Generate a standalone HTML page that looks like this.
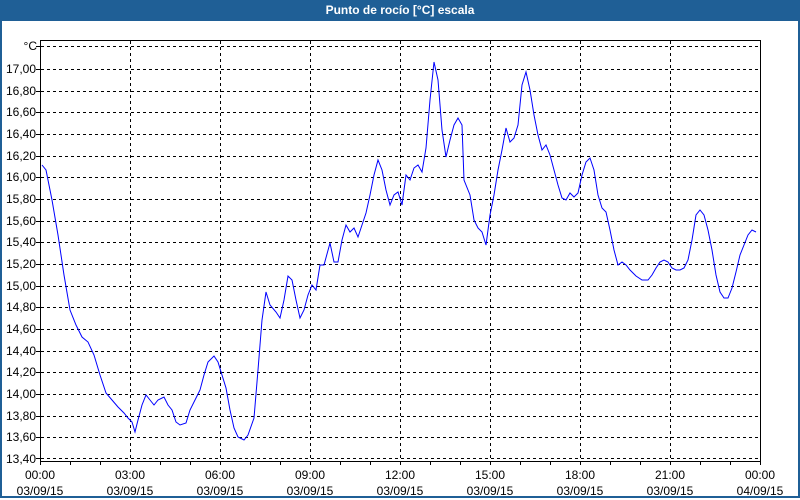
<!DOCTYPE html>
<html><head><meta charset="utf-8"><style>
html,body{margin:0;padding:0;background:#fff;}
body{width:800px;height:500px;overflow:hidden;position:relative;font-family:"Liberation Sans",sans-serif;}
#frame{position:absolute;left:0;top:0;width:796px;height:496px;border:2px solid #1f5f96;border-top:none;}
#title{position:absolute;left:0;top:0;width:800px;height:21px;background:#1f5f96;color:#fff;font-weight:bold;font-size:12px;text-align:center;line-height:21px;}
svg{position:absolute;left:0;top:0;}
text{font-family:"Liberation Sans",sans-serif;font-size:12px;fill:#000;}
</style></head><body>
<div id="frame"></div>
<div id="title">Punto de rocío [°C] escala</div>
<svg width="800" height="500">
<g stroke="#000" stroke-width="1" stroke-dasharray="3,3" shape-rendering="crispEdges">
<line x1="41" y1="46.5" x2="760" y2="46.5"/>
<line x1="41" y1="69.5" x2="760" y2="69.5"/>
<line x1="41" y1="91.5" x2="760" y2="91.5"/>
<line x1="41" y1="112.5" x2="760" y2="112.5"/>
<line x1="41" y1="134.5" x2="760" y2="134.5"/>
<line x1="41" y1="156.5" x2="760" y2="156.5"/>
<line x1="41" y1="177.5" x2="760" y2="177.5"/>
<line x1="41" y1="199.5" x2="760" y2="199.5"/>
<line x1="41" y1="221.5" x2="760" y2="221.5"/>
<line x1="41" y1="242.5" x2="760" y2="242.5"/>
<line x1="41" y1="264.5" x2="760" y2="264.5"/>
<line x1="41" y1="286.5" x2="760" y2="286.5"/>
<line x1="41" y1="307.5" x2="760" y2="307.5"/>
<line x1="41" y1="329.5" x2="760" y2="329.5"/>
<line x1="41" y1="351.5" x2="760" y2="351.5"/>
<line x1="41" y1="372.5" x2="760" y2="372.5"/>
<line x1="41" y1="394.5" x2="760" y2="394.5"/>
<line x1="41" y1="416.5" x2="760" y2="416.5"/>
<line x1="41" y1="437.5" x2="760" y2="437.5"/>
<line x1="41" y1="458.5" x2="760" y2="458.5"/>
<line x1="130.5" y1="41" x2="130.5" y2="460"/>
<line x1="220.5" y1="41" x2="220.5" y2="460"/>
<line x1="310.5" y1="41" x2="310.5" y2="460"/>
<line x1="400.5" y1="41" x2="400.5" y2="460"/>
<line x1="490.5" y1="41" x2="490.5" y2="460"/>
<line x1="580.5" y1="41" x2="580.5" y2="460"/>
<line x1="670.5" y1="41" x2="670.5" y2="460"/>
</g>
<g stroke="#000" stroke-width="1" fill="none" shape-rendering="crispEdges">
<path d="M40.5 40.5 H760.5 V461.5 H40.5 Z"/>
<path d="M40.5 461 v4 M70.5 461 v4 M100.5 461 v4 M130.5 461 v4 M160.5 461 v4 M190.5 461 v4 M220.5 461 v4 M250.5 461 v4 M280.5 461 v4 M310.5 461 v4 M340.5 461 v4 M370.5 461 v4 M400.5 461 v4 M430.5 461 v4 M460.5 461 v4 M490.5 461 v4 M520.5 461 v4 M550.5 461 v4 M580.5 461 v4 M610.5 461 v4 M640.5 461 v4 M670.5 461 v4 M700.5 461 v4 M730.5 461 v4 M760.5 461 v4"/>
<path d="M36 46.5h5M36 69.5h5M36 91.5h5M36 112.5h5M36 134.5h5M36 156.5h5M36 177.5h5M36 199.5h5M36 221.5h5M36 242.5h5M36 264.5h5M36 286.5h5M36 307.5h5M36 329.5h5M36 351.5h5M36 372.5h5M36 394.5h5M36 416.5h5M36 437.5h5M36 458.5h5"/>
</g>
<g text-anchor="end">
<text x="37" y="50">°C</text>
<text x="36" y="73">17,00</text>
<text x="36" y="95">16,80</text>
<text x="36" y="116">16,60</text>
<text x="36" y="138">16,40</text>
<text x="36" y="160">16,20</text>
<text x="36" y="181">16,00</text>
<text x="36" y="203">15,80</text>
<text x="36" y="225">15,60</text>
<text x="36" y="246">15,40</text>
<text x="36" y="268">15,20</text>
<text x="36" y="290">15,00</text>
<text x="36" y="311">14,80</text>
<text x="36" y="333">14,60</text>
<text x="36" y="355">14,40</text>
<text x="36" y="376">14,20</text>
<text x="36" y="398">14,00</text>
<text x="36" y="420">13,80</text>
<text x="36" y="441">13,60</text>
<text x="36" y="463">13,40</text>
</g>
<g text-anchor="middle">
<text x="40" y="479">00:00</text><text x="40" y="495">03/09/15</text>
<text x="130" y="479">03:00</text><text x="130" y="495">03/09/15</text>
<text x="220" y="479">06:00</text><text x="220" y="495">03/09/15</text>
<text x="310" y="479">09:00</text><text x="310" y="495">03/09/15</text>
<text x="400" y="479">12:00</text><text x="400" y="495">03/09/15</text>
<text x="490" y="479">15:00</text><text x="490" y="495">03/09/15</text>
<text x="580" y="479">18:00</text><text x="580" y="495">03/09/15</text>
<text x="670" y="479">21:00</text><text x="670" y="495">03/09/15</text>
<text x="760" y="479">00:00</text><text x="760" y="495">04/09/15</text>
</g>
<polyline fill="none" stroke="#0000ff" stroke-width="1" points="42,165 46,170 52,200 58,235 64,275 70,310 76,325 82,337 88,342 94,355 100,375 106,393 112,400 118,407 124,413 128,418 132,422 135,432 138,420 142,405 146,395 150,400 154,405 158,400 164,397 168,405 172,410 176,422 180,425 186,423 190,410 196,398 200,390 204,375 208,362 214,356 218,362 222,375 226,388 230,410 234,428 238,437 244,440 248,435 254,418 258,370 262,320 266,292 270,305 276,312 280,318 284,300 288,276 292,280 296,300 300,318 304,310 308,295 312,285 316,290 320,265 324,265 330,243 334,262 338,262 342,240 346,225 350,232 354,228 358,237 362,225 366,213 370,195 374,175 378,160 382,170 386,190 390,205 394,195 398,192 402,205 406,175 410,180 414,168 418,165 422,172 426,148 430,100 434,62 438,80 442,130 446,157 450,140 454,125 458,118 462,125 464,180 470,195 474,220 478,228 482,232 486,245 490,215 494,195 498,170 502,150 506,128 510,142 514,138 518,125 522,85 526,72 530,90 534,115 538,135 542,150 546,145 550,155 554,170 558,185 562,198 566,200 570,193 574,197 578,193 582,175 586,162 590,158 594,170 598,195 602,208 606,212 610,230 614,250 618,265 622,262 626,265 630,270 636,276 642,280 648,280 652,275 656,268 660,262 664,260 668,262 672,268 676,270 680,270 684,268 688,260 692,240 696,215 700,210 704,215 708,230 712,250 716,275 720,292 724,298 728,298 732,288 736,272 740,255 744,245 748,235 752,230 756,232"/>
</svg>
</body></html>
